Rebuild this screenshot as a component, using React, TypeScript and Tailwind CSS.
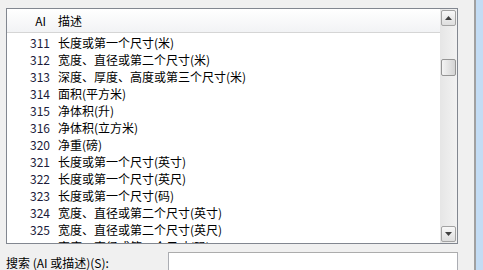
import React from 'react';

type AiRow = { code: string; label: string };

const ROWS: AiRow[] = [
  { code: '311', label: '长度或第一个尺寸(米)' },
  { code: '312', label: '宽度、直径或第二个尺寸(米)' },
  { code: '313', label: '深度、厚度、高度或第三个尺寸(米)' },
  { code: '314', label: '面积(平方米)' },
  { code: '315', label: '净体积(升)' },
  { code: '316', label: '净体积(立方米)' },
  { code: '320', label: '净重(磅)' },
  { code: '321', label: '长度或第一个尺寸(英寸)' },
  { code: '322', label: '长度或第一个尺寸(英尺)' },
  { code: '323', label: '长度或第一个尺寸(码)' },
  { code: '324', label: '宽度、直径或第二个尺寸(英寸)' },
  { code: '325', label: '宽度、直径或第二个尺寸(英尺)' },
  { code: '326', label: '宽度、直径或第二个尺寸(码)' },
];

const FONT = "font-['Segoe_UI','Noto_Sans_CJK_SC',sans-serif]";

function ScrollButton({ down }: { down?: boolean }) {
  return (
    <div className="mx-px flex h-[16px] items-center justify-center rounded-[2px] border border-[#a3a3a3] bg-gradient-to-b from-[#f8f8f8] to-[#dedede]">
      <svg width="7" height="4" viewBox="0 0 7 4">
        {down ? <path d="M0 0h7L3.5 4z" fill="#404040" /> : <path d="M0 4h7L3.5 0z" fill="#404040" />}
      </svg>
    </div>
  );
}

function Scrollbar() {
  return (
    <div className="flex w-[17px] shrink-0 flex-col bg-gradient-to-r from-[#e6e6e6] to-[#f2f2f2] py-px">
      <ScrollButton />
      <div className="flex-1 pt-[33px]">
        <div className="mx-px h-[17px] rounded-[2px] border border-[#959595] bg-gradient-to-r from-[#f4f4f4] to-[#d4d4d4]" />
      </div>
      <ScrollButton down />
    </div>
  );
}

export default function App() {
  return (
    <div className={`flex h-[270px] w-[483px] overflow-hidden bg-[#f0f0f0] text-[12px] text-black ${FONT}`}>
      <div className="flex w-[474px] flex-col pl-[6px] pr-[16px] pt-[8px]">
        <div className="flex h-[236px] border border-[#828790] bg-white">
          <div className="flex min-w-0 flex-1 flex-col overflow-hidden">
            <div className="flex h-[24px] shrink-0 items-center border-b border-[#d5d5d5] bg-gradient-to-b from-white to-[#f2f3f5] pt-px">
              <span className="w-[39px] text-right">AI</span>
              <span className="pl-[12px]">描述</span>
            </div>
            <div className="pt-px">
              {ROWS.map((row) => (
                <div key={row.code} className="flex h-[17px] items-center leading-[17px]">
                  <span className="w-[43px] text-right text-[#1b1b3a]">{row.code}</span>
                  <span className="whitespace-nowrap pl-[8px]">{row.label}</span>
                </div>
              ))}
            </div>
          </div>
          <Scrollbar />
        </div>
        <div className="mt-[8px] flex items-start">
          <span className="w-[162px] whitespace-nowrap pt-[2px] leading-[17px]">搜索 (AI 或描述)(S):</span>
          <div className="h-[30px] flex-1 border border-[#abadb3] border-t-[#acacac] bg-white" />
        </div>
      </div>
      <div className="w-[2px] bg-[#a0a0a0]" />
      <div className="flex-1 bg-[#c3dcf4]" />
    </div>
  );
}
